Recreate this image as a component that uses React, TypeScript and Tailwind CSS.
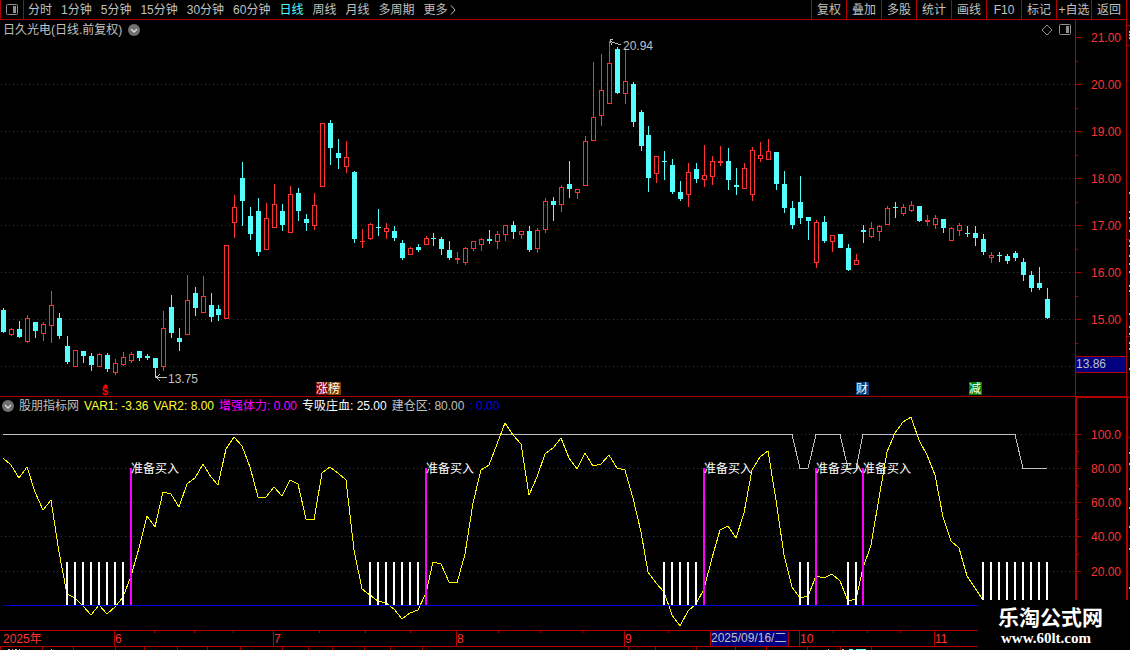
import { useState } from 'react'
import clsx from 'clsx'

// [high, bodyTop, bodyBottom, low, rising]
type Candle = [number, number, number, number, 0 | 1]

const candles: Candle[] = [
  [308, 310, 332, 333, 0], [328, 329, 335, 336, 1], [321, 329, 337, 338, 0], [315, 318, 342, 343, 1],
  [322, 322, 331, 338, 0], [322, 324, 334, 341, 1], [291, 305, 326, 343, 1], [313, 318, 336, 339, 0],
  [336, 346, 362, 364, 0], [350, 350, 367, 367, 1], [351, 351, 356, 363, 0], [353, 356, 365, 371, 0],
  [353, 354, 367, 367, 1], [353, 355, 369, 372, 0], [359, 363, 373, 375, 1], [352, 357, 365, 366, 1],
  [352, 354, 361, 363, 1], [351, 351, 358, 361, 0], [354, 356, 358, 360, 0], [358, 358, 368, 378, 0],
  [311, 328, 367, 371, 1], [295, 307, 333, 338, 0], [328, 338, 342, 351, 0], [275, 300, 335, 335, 1],
  [287, 293, 308, 316, 0], [276, 296, 313, 313, 1], [293, 305, 317, 322, 0], [305, 309, 315, 321, 0],
  [245, 245, 319, 319, 1], [195, 207, 223, 238, 1], [162, 178, 201, 226, 0], [207, 216, 234, 240, 0],
  [198, 211, 252, 256, 0], [203, 218, 250, 250, 1], [184, 204, 228, 228, 1], [204, 211, 225, 231, 0],
  [186, 194, 233, 233, 1], [188, 193, 211, 221, 0], [214, 219, 223, 231, 0], [193, 205, 226, 230, 1],
  [123, 123, 187, 187, 1], [120, 123, 148, 165, 0], [139, 153, 158, 169, 0], [141, 157, 167, 173, 1],
  [171, 172, 239, 243, 0], [229, 241, 242, 248, 1], [223, 224, 239, 240, 1], [209, 227, 228, 236, 0],
  [223, 228, 232, 239, 1], [226, 231, 238, 241, 0], [240, 243, 258, 260, 0], [247, 248, 255, 255, 1],
  [244, 247, 250, 252, 0], [236, 238, 245, 245, 1], [233, 238, 239, 246, 0], [237, 239, 249, 255, 0],
  [241, 250, 258, 260, 0], [252, 258, 260, 264, 1], [247, 248, 263, 265, 1], [241, 241, 249, 251, 1],
  [238, 239, 245, 251, 1], [230, 239, 241, 244, 0], [231, 234, 242, 249, 1], [225, 225, 235, 241, 1],
  [221, 225, 232, 239, 0], [231, 231, 235, 239, 1], [226, 231, 250, 252, 0], [228, 230, 249, 253, 1],
  [198, 201, 230, 233, 1], [197, 201, 205, 221, 0], [185, 187, 205, 212, 1], [161, 184, 189, 198, 0],
  [189, 189, 193, 199, 1], [136, 141, 186, 186, 1], [62, 117, 141, 141, 1], [54, 90, 116, 126, 1],
  [41, 63, 104, 104, 1], [47, 49, 93, 94, 0], [48, 81, 94, 104, 1], [82, 84, 122, 127, 0],
  [110, 112, 146, 151, 0], [126, 135, 178, 192, 0], [156, 156, 174, 183, 1], [151, 161, 162, 180, 0],
  [159, 165, 192, 194, 0], [181, 192, 199, 201, 0], [163, 172, 195, 207, 1], [163, 169, 179, 183, 0],
  [145, 175, 180, 187, 1], [156, 161, 177, 185, 1], [146, 161, 163, 166, 1], [148, 161, 180, 190, 0],
  [168, 185, 187, 195, 0], [163, 168, 189, 189, 1], [147, 150, 195, 201, 1], [142, 155, 159, 162, 1],
  [139, 151, 160, 160, 1], [152, 152, 184, 190, 0], [171, 184, 208, 213, 0], [201, 208, 225, 229, 0],
  [176, 202, 218, 224, 0], [217, 217, 221, 240, 0], [220, 222, 263, 268, 1], [216, 222, 241, 243, 0],
  [235, 235, 242, 252, 1], [234, 234, 248, 248, 0], [244, 248, 270, 271, 0], [254, 260, 265, 265, 1],
  [225, 230, 232, 243, 0], [222, 228, 237, 238, 1], [225, 226, 232, 241, 1], [206, 208, 225, 225, 1],
  [202, 207, 208, 218, 0], [204, 207, 214, 216, 1], [201, 205, 211, 212, 1], [206, 206, 221, 222, 0],
  [215, 220, 222, 226, 1], [215, 218, 225, 229, 1], [219, 219, 228, 233, 0], [227, 228, 241, 241, 1],
  [223, 225, 231, 236, 1], [226, 233, 234, 237, 0], [226, 233, 238, 246, 0], [234, 239, 252, 255, 0],
  [252, 255, 258, 263, 1], [252, 255, 256, 262, 0], [254, 256, 261, 264, 0], [251, 253, 258, 261, 0],
  [258, 262, 275, 281, 0], [271, 275, 288, 292, 0], [267, 283, 288, 290, 0], [288, 299, 318, 319, 0],
]

const oscillator = [
  458, 465, 478, 467, 492, 510, 500, 552, 594, 598, 606, 615, 605, 614, 607, 597, 576, 548, 516, 527,
  492, 494, 507, 484, 478, 464, 477, 485, 449, 437, 446, 467, 497, 497, 487, 496, 480, 484, 519, 520,
  473, 467, 473, 480, 550, 589, 595, 601, 603, 609, 619, 613, 610, 593, 562, 564, 582, 583, 554, 503,
  470, 465, 444, 423, 435, 444, 495, 477, 454, 448, 438, 458, 469, 453, 466, 464, 455, 468, 470, 498,
  532, 572, 583, 592, 615, 626, 611, 604, 589, 558, 530, 526, 538, 513, 470, 457, 451, 500, 555, 587,
  598, 596, 576, 578, 574, 581, 601, 599, 568, 545, 498, 452, 433, 422, 417, 440, 455, 475, 517, 541,
  548, 576, 588, 600,
]

const zoneDips = [100, 101, 106, 107, 128, 129, 130, 131]
const whiteBars = [
  8, 9, 10, 11, 12, 13, 14, 15, 46, 47, 48, 49, 50, 51, 52, 83, 84, 85, 86, 87, 100, 101, 106, 107,
  123, 124, 125, 126, 127, 128, 129, 130, 131,
]
const buySignals = [16, 53, 88, 102, 108]

// every 27th step is one pixel short
const barX = (i: number) => 3 + i * 8 - Math.floor(i / 27)

const periods = ['分时', '1分钟', '5分钟', '15分钟', '30分钟', '60分钟', '日线', '周线', '月线', '多周期']
const tools = ['复权', '叠加', '多股', '统计', '画线', 'F10', '标记', '+自选', '返回']

const priceTicks = [21, 20, 19, 18, 17, 16, 15].map((p) => ({ label: p.toFixed(2), y: 37 + (21 - p) * 47 }))
const oscTicks = [
  { label: '100.0', y: 434 },
  { label: '80.00', y: 468 },
  { label: '60.00', y: 502 },
  { label: '40.00', y: 536 },
  { label: '20.00', y: 571 },
]

const legend = [
  { text: '股朋指标网', color: 'text-[#c0c0c0]' },
  { text: 'VAR1: -3.36', color: 'text-[#ffff32]' },
  { text: 'VAR2: 8.00', color: 'text-[#ffff32]' },
  { text: '增强体力: 0.00', color: 'text-[#ff00ff]' },
  { text: '专吸庄血: 25.00', color: 'text-white' },
  { text: '建仓区: 80.00', color: 'text-[#c0c0c0]' },
  { text: ': 0.00', color: 'text-[#0000ff]' },
]

const months = [
  { x: 114, label: '6' },
  { x: 273, label: '7' },
  { x: 456, label: '8' },
  { x: 624, label: '9' },
  { x: 799, label: '10' },
  { x: 934, label: '11' },
]
const weekTicks = [154, 194, 233, 319, 365, 410, 498, 540, 582, 668, 833, 867, 900]
const footTicks = [
  0, 42, 73, 115, 144, 177, 207, 240, 282, 308, 332, 364, 390, 422, 628, 655, 696, 735, 766, 807, 840, 871,
]

const badges = [
  { x: 316, text: '涨', fill: '#800000' },
  { x: 328, text: '榜', fill: '#804000' },
  { x: 856, text: '财', fill: '#004080' },
  { x: 969, text: '减', fill: '#008000' },
]

function PanelIcon() {
  return (
    <svg width="12" height="11" viewBox="0 0 12 11" aria-hidden="true">
      <rect x="0.5" y="0.5" width="11" height="10" rx="1" fill="none" stroke="#909090" />
      <rect x="7" y="2" width="3" height="7" fill="#909090" />
    </svg>
  )
}

function ChevronBadge() {
  return (
    <svg width="12" height="12" viewBox="0 0 12 12" aria-hidden="true">
      <circle cx="6" cy="6" r="6" fill="#707070" />
      <path d="M3 5l3 3 3-3" fill="none" stroke="#e0e0e0" strokeWidth="1.3" />
    </svg>
  )
}

function GridLine({ y }: { y: number }) {
  return <path d={`M1 ${y + 0.5}H1075`} stroke="#b00000" strokeDasharray="1 3" />
}

function Toolbar() {
  const [active, setActive] = useState('日线')

  return (
    <header className="mr-[3px] flex h-5 items-stretch border-x border-b border-[#b00000]">
      <button aria-label="侧栏" className="flex w-[23px] items-center justify-center border-r border-[#b00000]">
        <PanelIcon />
      </button>
      <nav className="flex flex-1 items-center gap-[9px] pl-1 whitespace-nowrap">
        {periods.map((p) => (
          <button key={p} onClick={() => setActive(p)} className={clsx(active === p && 'text-[#54ffff]')}>
            {p}
          </button>
        ))}
        <button className="flex items-center gap-0.5">
          更多
          <svg width="6" height="10" viewBox="0 0 6 10" aria-hidden="true">
            <path d="M1 0.5L5 5L1 9.5" fill="none" stroke="#c0c0c0" />
          </svg>
        </button>
      </nav>
      <div className="flex">
        {tools.map((label) => (
          <button
            key={label}
            className="flex w-[35px] items-center justify-center border-l border-[#b00000] whitespace-nowrap"
          >
            {label}
          </button>
        ))}
      </div>
    </header>
  )
}

function PriceChart() {
  return (
    <svg viewBox="0 39 1075 357" className="block w-full" shapeRendering="crispEdges">
      {[84, 131, 178, 225, 272, 319, 366].map((y) => (
        <GridLine key={y} y={y} />
      ))}
      {candles.map(([high, top, bottom, low, up], i) => {
        const x = barX(i)
        const color = up ? '#ff3232' : '#54ffff'
        return (
          <g key={i}>
            <rect x={x} y={high} width="1" height={low - high} fill={color} />
            <rect x={x - 2} y={top} width="5" height={bottom - top} fill={color} />
            {up === 1 && bottom - top > 2 && (
              <rect x={x - 1} y={top + 1} width="3" height={bottom - top - 2} fill="#000" />
            )}
          </g>
        )
      })}
      <g fill="none" stroke="#c0c0c0">
        <path d="M156 377.5H167M160 374l-4 3.5l4 3" />
        <path d="M610 41.5L621 45M613 39.5h-3v2l2 3" />
      </g>
      <g fill="#c0c0c0" fontSize="12">
        <text x="168" y="383">13.75</text>
        <text x="623" y="50">20.94</text>
      </g>
      <path d="M105.5 384l3 3h-6z" fill="#ff0000" />
      <text x="102" y="395" fontSize="11" fontWeight="bold" fill="#ff0000">$</text>
      {badges.map((b) => (
        <g key={b.x}>
          <rect x={b.x} y="382" width="13" height="13" fill={b.fill} />
          <text x={b.x} y="393" fontSize="12" fill="#fff">{b.text}</text>
        </g>
      ))}
    </svg>
  )
}

function OscillatorChart() {
  const line = oscillator.map((y, i) => `${barX(i)},${y}`).join(' ')
  const zone = candles.map((_, i) => `${barX(i)},${zoneDips.includes(i) ? 468.5 : 434.5}`).join(' ')

  return (
    <svg viewBox="0 415 1075 215" className="block w-full" shapeRendering="crispEdges">
      {oscTicks.map((t) => (
        <GridLine key={t.y} y={t.y} />
      ))}
      <polyline points={zone} fill="none" stroke="#c0c0c0" />
      <polyline points={line} fill="none" stroke="#ffff00" />
      {whiteBars.map((i) => (
        <rect key={i} x={barX(i) - 1} y="562" width="2" height="43" fill="#fff" />
      ))}
      {buySignals.map((i) => (
        <g key={i}>
          <rect x={barX(i) - 1} y="468" width="2" height="137" fill="#ff00ff" />
          <text x={barX(i)} y="473" fontSize="12" fill="#fff">准备买入</text>
        </g>
      ))}
      <rect x="3" y="605" width="1072" height="1" fill="#0000e0" />
    </svg>
  )
}

function Timeline() {
  return (
    <svg viewBox="0 630 1075 20" className="block w-full" shapeRendering="crispEdges" fontSize="12">
      <g fill="#b00000">
        <rect x="0" y="630" width="1075" height="1" />
        <rect x="0" y="646" width="1075" height="1" />
        {weekTicks.map((x) => (
          <rect key={x} x={x} y="631" width="1" height="2" />
        ))}
        {footTicks.map((x) => (
          <rect key={x} x={x} y="647" width="1" height="3" />
        ))}
        {months.map((m) => (
          <rect key={m.x} x={m.x} y="631" width="1" height="15" />
        ))}
      </g>
      <text x="3" y="643" fill="#ff3232">2025年</text>
      {months.map((m) => (
        <text key={m.x} x={m.x + 1} y="643" fill="#ff3232">{m.label}</text>
      ))}
      <rect x="710" y="631" width="79" height="15" fill="#000080" />
      <path d="M710.5 631v15M788.5 631v15" stroke="#b00000" />
      <text x="711" y="642" fill="#c0c0c0">2025/09/16/二</text>
      <path d="M8 649.5h2M12 649.5h1M15 649.5h2M19 649.5h1M51 649.5h1M828 649.5h1M842 649.5h2" stroke="#c0c0c0" />
      <path d="M849 649.5h4M856 649.5h10" stroke="#54ffff" />
    </svg>
  )
}

function ValueAxis() {
  return (
    <svg viewBox="1075 20 55 630" className="block w-[55px] shrink-0" shapeRendering="crispEdges" fontSize="12">
      <g fill="#b00000">
        <rect x="1075" y="20" width="1" height="376" />
        <rect x="1126" y="20" width="1" height="376" />
        <rect x="1075" y="396" width="52" height="2" />
        <rect x="1075" y="396" width="2" height="254" />
        <rect x="1126" y="396" width="2" height="254" />
        {priceTicks.map((t) => (
          <g key={t.y}>
            <rect x="1076" y={t.y} width="5" height="1" />
            <rect x="1076" y={t.y + 24} width="2" height="1" />
          </g>
        ))}
        {oscTicks.map((t) => (
          <rect key={t.y} x="1077" y={t.y} width="4" height="1" />
        ))}
        {[451, 485, 519, 554].map((y) => (
          <rect key={y} x="1077" y={y} width="2" height="1" />
        ))}
        {[25, 45, 239, 336, 397, 437].map((y) => (
          <rect key={y} x="1127" y={y} width="3" height="1" />
        ))}
      </g>
      <g fill="#c0c0c0">
        {[
          31, 34, 37, 192, 211, 217, 230, 240, 245, 255, 263, 271, 285, 290, 313, 326, 333, 342, 348, 368, 452,
          463, 488, 507, 526, 548, 587,
        ].map((y) => (
          <rect key={y} x="1129" y={y} width="1" height="2" />
        ))}
      </g>
      <g fill="#ff3232" textAnchor="end">
        {[...priceTicks, ...oscTicks].map((t) => (
          <text key={t.y} x="1121" y={t.y + 5}>{t.label}</text>
        ))}
      </g>
      <rect x="1076" y="357" width="50" height="15" fill="#000080" />
      <path d="M1075 356.5H1126M1075 372.5H1126" stroke="#b00000" />
      <text x="1076" y="368" fill="#c0c0c0">13.86</text>
    </svg>
  )
}

export default function App() {
  return (
    <div className="relative min-h-screen overflow-hidden bg-black font-['Liberation_Sans','Noto_Sans_CJK_SC',sans-serif] text-[12px] leading-4 text-[#c0c0c0]">
      <Toolbar />
      <main className="flex items-start">
        <div className="min-w-0 flex-1">
          <div className="flex h-[19px] items-center gap-1.5 pr-1 pl-[3px]">
            <h1>日久光电(日线.前复权)</h1>
            <button aria-label="展开">
              <ChevronBadge />
            </button>
            <div className="ml-auto flex items-center gap-1.5">
              <svg width="12" height="12" viewBox="0 0 12 12" aria-hidden="true">
                <path d="M6 1l5 5-5 5-5-5z" fill="none" stroke="#909090" />
              </svg>
              <PanelIcon />
            </div>
          </div>
          <PriceChart />
          <div className="flex h-[19px] items-center gap-[5px] border-t border-[#b00000] pl-0.5 whitespace-nowrap">
            <button aria-label="指标">
              <ChevronBadge />
            </button>
            {legend.map((l) => (
              <span key={l.text} className={l.color}>
                {l.text}
              </span>
            ))}
          </div>
          <OscillatorChart />
          <Timeline />
        </div>
        <ValueAxis />
      </main>
      {/* site mark sits over the corner of the chart */}
      <div className="absolute right-0 bottom-0 h-[50px] w-[152px] bg-black pt-1.5 pl-5 font-bold whitespace-nowrap text-white">
        <p className="text-[21px] leading-6">乐淘公式网</p>
        <p className="pl-[3px] font-['Liberation_Serif',serif] text-[15px] leading-4">www.60lt.com</p>
      </div>
    </div>
  )
}
